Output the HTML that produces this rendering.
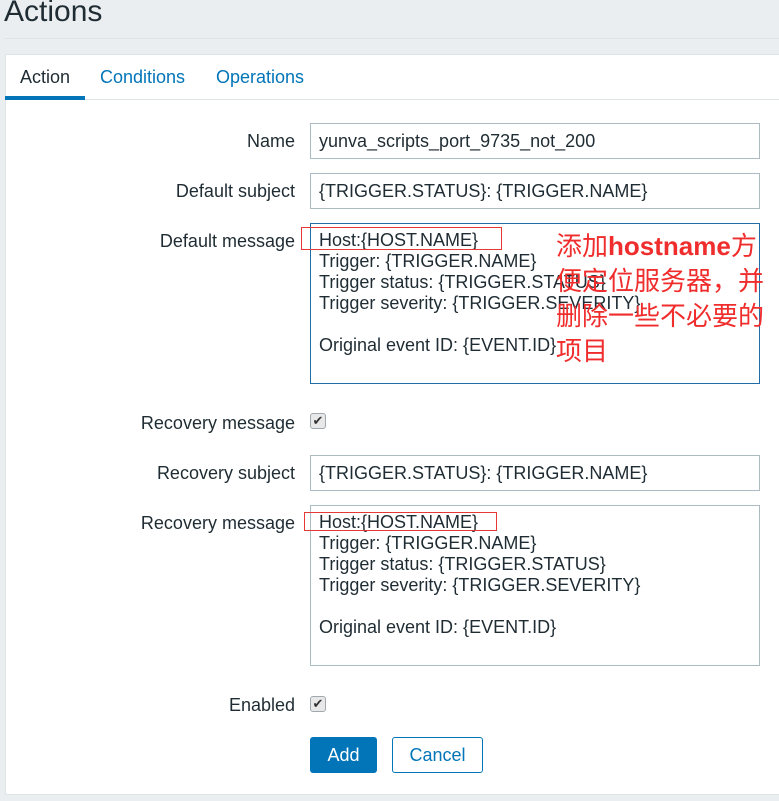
<!DOCTYPE html>
<html><head><meta charset="utf-8"><style>
*{box-sizing:border-box;margin:0;padding:0}
body{width:779px;height:801px;background:#ebeef0;font-family:"Liberation Sans",Arial,sans-serif;color:#1f2c33;position:relative;overflow:hidden;font-size:18px}
.a{position:absolute}
.title{left:4px;top:-5px;font-size:30px;color:#1f2c33}
.hr{left:4px;top:38px;width:775px;height:1px;background:#dfe4e7}
.panel{left:5px;top:54px;width:774px;height:741px;background:#fff;border:1px solid #dfe4e7;border-right:none}
.tab{top:67px;font-size:18px;color:#0275b8}
.lbl{right:484px;text-align:right;white-space:nowrap}
.in{left:310px;width:450px;height:36px;border:1px solid #acbbc2;padding:0 8px;line-height:34px;white-space:nowrap}
.ta{left:310px;width:450px;height:161px;border:1px solid #acbbc2;padding:6px 8px;line-height:21px;white-space:pre}
.cb{left:310px;width:16px;height:16px;border:1px solid #a0a8ad;border-radius:3px;background:#e8e8e8;font-size:13px;line-height:14px;text-align:center;color:#333}
.rb{border:1px solid #e53935}
.red{left:556px;top:229px;color:#f02d2d;font-size:26px;line-height:35px;font-family:"Liberation Sans","Noto Sans CJK SC",sans-serif;white-space:nowrap}
</style></head><body>
<div class="a title">Actions</div>
<div class="a hr"></div>
<div class="a panel"></div>
<div class="a tab" style="left:20px;color:#1f2c33">Action</div>
<div class="a tab" style="left:100px">Conditions</div>
<div class="a tab" style="left:216px">Operations</div>
<div class="a" style="left:6px;top:99px;width:773px;height:1px;background:#dfe4e7"></div>
<div class="a" style="left:5px;top:96px;width:80px;height:4px;background:#0275b8"></div>

<div class="a lbl" style="top:131px">Name</div>
<div class="a in" style="top:123px">yunva_scripts_port_9735_not_200</div>
<div class="a lbl" style="top:181px">Default subject</div>
<div class="a in" style="top:173px">{TRIGGER.STATUS}: {TRIGGER.NAME}</div>
<div class="a lbl" style="top:231px">Default message</div>
<div class="a ta" style="top:223px;height:161px;border-color:#1f6ea8">Host:{HOST.NAME}
Trigger: {TRIGGER.NAME}
Trigger status: {TRIGGER.STATUS}
Trigger severity: {TRIGGER.SEVERITY}

Original event ID: {EVENT.ID}</div>
<div class="a rb" style="left:301px;top:227px;width:201px;height:23px"></div>
<div class="a red">添加<b>hostname</b>方<br>便定位服务器，并<br>删除一些不必要的<br>项目</div>

<div class="a lbl" style="top:413px">Recovery message</div>
<div class="a cb" style="top:413px">✔</div>
<div class="a lbl" style="top:463px">Recovery subject</div>
<div class="a in" style="top:455px">{TRIGGER.STATUS}: {TRIGGER.NAME}</div>
<div class="a lbl" style="top:513px">Recovery message</div>
<div class="a ta" style="top:505px">Host:{HOST.NAME}
Trigger: {TRIGGER.NAME}
Trigger status: {TRIGGER.STATUS}
Trigger severity: {TRIGGER.SEVERITY}

Original event ID: {EVENT.ID}</div>
<div class="a rb" style="left:304px;top:512px;width:193px;height:19px"></div>

<div class="a lbl" style="top:695px">Enabled</div>
<div class="a cb" style="top:696px">✔</div>
<div class="a" style="left:310px;top:737px;width:67px;height:36px;background:#0275b8;border-radius:3px;color:#fff;text-align:center;line-height:36px">Add</div>
<div class="a" style="left:392px;top:737px;width:91px;height:36px;border:1px solid #0275b8;border-radius:3px;color:#0275b8;text-align:center;line-height:34px">Cancel</div>
</body></html>
